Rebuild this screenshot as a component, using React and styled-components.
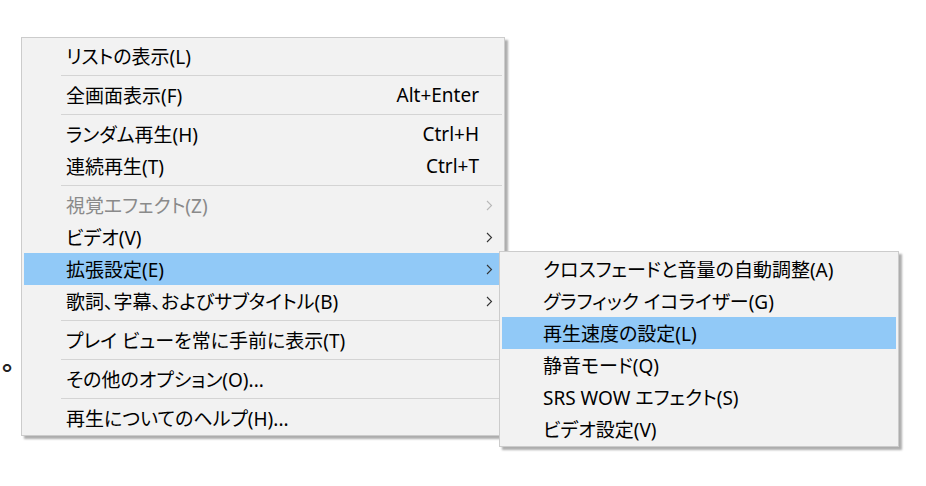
import React from 'react'
import styled, { createGlobalStyle } from 'styled-components'

const GlobalStyle = createGlobalStyle`
  html, body {
    margin: 0;
    padding: 0;
    background: #ffffff;
  }
  body {
    font-family: "Noto Sans", "Noto Sans CJK JP", sans-serif;
  }
`;

const Page = styled.div`
  position: relative;
  width: 926px;
  height: 486px;
  overflow: hidden;
  background: #ffffff;
`;

const BackText = styled.p`
  margin: 0;
  padding: 344px 0 0 2px;
  font-family: "Noto Sans CJK JP", sans-serif;
  font-size: 26px;
  line-height: 30px;
  font-weight: 700;
  color: #222;
`;

const Menu = styled.div`
  position: absolute;
  left: ${p => p.$left}px;
  top: ${p => p.$top}px;
  width: ${p => p.$width}px;
  box-sizing: border-box;
  background: #f2f2f2;
  border: 1px solid #cccccc;
  padding: ${p => p.$padTop}px 2px 1px 2px;
  box-shadow: 3px 3px 2px rgba(0, 0, 0, 0.32);
  display: flex;
  flex-direction: column;
`;

const Item = styled.div`
  height: 32px;
  display: flex;
  align-items: center;
  padding-left: ${p => p.$indent}px;
  background: ${p => (p.$active ? '#91c9f7' : 'transparent')};
  color: ${p => (p.$disabled ? '#8a8a8a' : '#000000')};
  font-family: "Noto Sans", "Noto Sans CJK JP", sans-serif;
  font-size: 19px;
  font-feature-settings: "palt";
  white-space: nowrap;
`;

const Label = styled.span`
  flex: 1;
`;

const Shortcut = styled.span`
  padding-right: 2px;
`;

const ArrowCell = styled.span`
  width: 21px;
  display: flex;
  align-items: center;
  padding-left: 5px;
  box-sizing: border-box;
`;

const Separator = styled.div`
  height: 1px;
  margin: 3px 0 3px 37px;
  background: #d4d4d4;
`;

function Chevron({ disabled }) {
  return (
    <svg width="7" height="11" viewBox="0 0 7 11">
      <polyline
        points="1,1 5.5,5.5 1,10"
        fill="none"
        stroke={disabled ? '#b8b8b8' : '#333333'}
        strokeWidth="1.1"
      />
    </svg>
  );
}

const mainItems = [
  { label: 'リストの表示(L)' },
  'sep',
  { label: '全画面表示(F)', shortcut: 'Alt+Enter' },
  'sep',
  { label: 'ランダム再生(H)', shortcut: 'Ctrl+H' },
  { label: '連続再生(T)', shortcut: 'Ctrl+T' },
  'sep',
  { label: '視覚エフェクト(Z)', sub: true, disabled: true },
  { label: 'ビデオ(V)', sub: true },
  { label: '拡張設定(E)', sub: true, active: true },
  { label: '歌詞、字幕、およびサブタイトル(B)', sub: true },
  'sep',
  { label: 'プレイ ビューを常に手前に表示(T)' },
  'sep',
  { label: 'その他のオプション(O)...' },
  'sep',
  { label: '再生についてのヘルプ(H)...' },
];

const subItems = [
  { label: 'クロスフェードと音量の自動調整(A)' },
  { label: 'グラフィック イコライザー(G)' },
  { label: '再生速度の設定(L)', active: true },
  { label: '静音モード(Q)' },
  { label: 'SRS WOW エフェクト(S)' },
  { label: 'ビデオ設定(V)' },
];

function MenuList({ items, indent }) {
  return items.map((it, i) =>
    it === 'sep' ? (
      <Separator key={i} />
    ) : (
      <Item key={i} $indent={indent} $active={it.active} $disabled={it.disabled}>
        <Label>{it.label}</Label>
        {it.shortcut && <Shortcut>{it.shortcut}</Shortcut>}
        <ArrowCell>{it.sub && <Chevron disabled={it.disabled} />}</ArrowCell>
      </Item>
    )
  );
}

export default function App() {
  return (
    <Page>
      <GlobalStyle />
      <BackText>。</BackText>
      <Menu $left={21} $top={37} $width={484} $padTop={2}>
        <MenuList items={mainItems} indent={42} />
      </Menu>
      <Menu $left={499} $top={251} $width={400} $padTop={1}>
        <MenuList items={subItems} indent={41} />
      </Menu>
    </Page>
  );
}
